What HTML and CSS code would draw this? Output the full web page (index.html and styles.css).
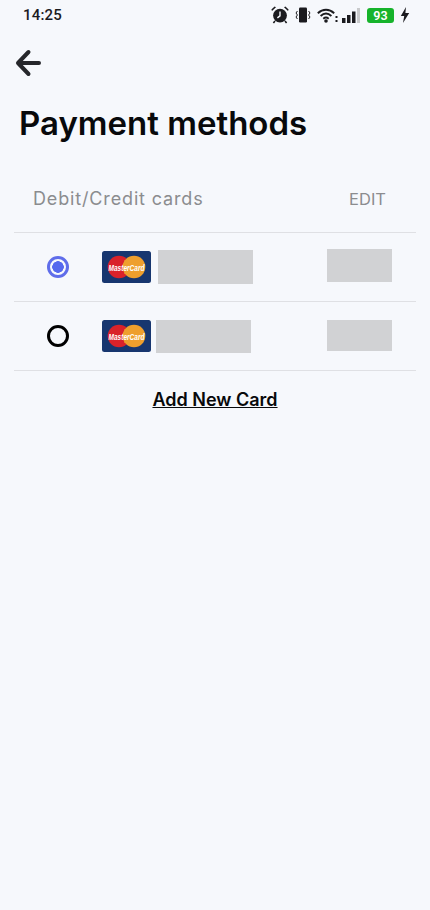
FILE: index.html
```html
<!DOCTYPE html>
<html lang="en">
<head>
<meta charset="utf-8">
<title>Payment methods</title>
<link rel="stylesheet" href="styles.css">
</head>
<body>
<div class="status">
  <span class="time">14:25</span>
  <div class="status-icons">
    <svg class="i-alarm" viewBox="0 0 18 18"><path d="M1 5 5 1.200 3.600.4.4 3.400zM17 5 13 1.200l1.400-.8 3.200 3z" fill="#1b1b1f"/><circle cx="9" cy="9.600" r="6.900" fill="#1b1b1f"/><path d="M9 5.500v4.400l-2.600 2" fill="none" stroke="#f6f8fc" stroke-width="1.400"/><path d="M4 15l-1.600 2M14 15l1.600 2" stroke="#1b1b1f" stroke-width="1.600"/></svg>
    <svg class="i-vib" viewBox="0 0 16 16"><rect x="4" y="0.500" width="8" height="15" rx="1.200" fill="#1b1b1f"/><path d="M2.400 4 1 6l1.400 2L1 10l1.400 2M13.600 4 15 6l-1.400 2L15 10l-1.400 2" fill="none" stroke="#1b1b1f" stroke-width="1"/></svg>
    <svg class="i-wifi" viewBox="0 0 21 15"><g fill="none" stroke="#1b1b1f" stroke-width="1.900"><path d="M.8 5.200C5.800.6 12.200.6 17.200 5.200"/><path d="M3.600 8C7 4.900 11 4.900 14.400 8"/><path d="M6.300 10.700c1.800-1.500 3.600-1.500 5.400 0"/></g><circle cx="9" cy="13" r="1.800" fill="#1b1b1f"/><path d="M18.500 8h2v2h-2zM18.500 12h2v2h-2z" fill="#1b1b1f"/></svg>
    <svg class="i-signal" viewBox="0 0 18 15"><rect x="0" y="10" width="3.500" height="5" fill="#1b1b1f"/><rect x="5" y="7" width="3.500" height="8" fill="#1b1b1f"/><rect x="10" y="3.500" width="3.500" height="11.500" fill="#1b1b1f"/><rect x="15" y="0" width="3" height="15" fill="#c9cacc"/></svg>
    <span class="battery">93</span>
    <svg class="i-bolt" viewBox="0 0 10 16"><path d="M6 0 .8 9h3.400L3 16l6.200-10H5.400z" fill="#1b1b1f"/></svg>
  </div>
</div>

<button class="back" aria-label="Back">
  <svg viewBox="0 0 26 30" width="26" height="30"><path d="M24 15H3.500M13.500 4 3 15l10.500 11" fill="none" stroke="#26272b" stroke-width="4" stroke-linecap="round" stroke-linejoin="round"/></svg>
</button>

<h1 class="title">Payment methods</h1>

<div class="section-head">
  <span class="section-label">Debit/Credit cards</span>
  <span class="edit">EDIT</span>
</div>

<div class="list">
  <div class="row row-a">
    <span class="radio radio-on"></span>
    <svg class="card" viewBox="0 0 49 32"><use href="#mc"/></svg>
    <span class="mask mask-num"></span>
    <span class="mask mask-exp"></span>
  </div>
  <div class="row row-b">
    <span class="radio"></span>
    <svg class="card" viewBox="0 0 49 32">
      <defs>
        <g id="mc">
          <rect width="49" height="32" rx="2.500" fill="#17366f"/>
          <circle cx="17" cy="16" r="11.300" fill="#d9222a"/>
          <circle cx="32" cy="16" r="11.300" fill="#ee9f2d"/>
          <path d="M22 10h5M21 13h7M21 19h7M22 22h5" stroke="#ee9f2d" stroke-width="1.200"/>
          <text x="6.500" y="19.500" textLength="36" lengthAdjust="spacingAndGlyphs" class="mc-text">MasterCard</text>
        </g>
      </defs>
      <use href="#mc"/>
    </svg>
    <span class="mask mask-num"></span>
    <span class="mask mask-exp"></span>
  </div>
</div>

<a class="add" href="#">Add New Card</a>
</body>
</html>
```

FILE: styles.css
```css
* { box-sizing: border-box; }
html, body { margin: 0; padding: 0; }
body {
  width: 430px;
  height: 910px;
  overflow: hidden;
  background: #f6f8fc;
  font-family: "Inter", "Noto Sans", sans-serif;
  display: flex;
  flex-direction: column;
}
.status {
  height: 30px;
  display: flex;
  align-items: center;
  justify-content: space-between;
  padding: 0 20px 0 23px;
  flex: none;
}
.time {
  font: 500 15px/1 "Roboto", sans-serif;
  color: #1b1b1f;
  letter-spacing: 0.2px;
}
.status-icons { display: flex; align-items: center; }
.i-alarm { width: 18px; height: 18px; margin-right: 6px; }
.i-vib { width: 16px; height: 16px; margin-right: 6px; }
.i-wifi { width: 21px; height: 15px; margin-right: 4px; }
.i-signal { width: 18px; height: 15px; margin-right: 7px; }
.battery {
  width: 27px;
  height: 15px;
  border-radius: 3px;
  background: #16b32b;
  color: #fff;
  font: 600 12.500px/15px "Roboto", sans-serif;
  text-align: center;
  margin-right: 6px;
}
.i-bolt { width: 10px; height: 16px; }
.back {
  width: 26px;
  height: 30px;
  margin: 18px 0 0 15px;
  padding: 0;
  border: 0;
  background: none;
  flex: none;
  display: block;
}
.title {
  margin: 25px 0 0 19px;
  font: 600 33px/40px "Inter", sans-serif;
  color: #08090b;
  flex: none;
}
.section-head {
  margin: 44px 0 0;
  padding: 0 44px 0 33px;
  height: 24px;
  display: flex;
  justify-content: space-between;
  align-items: center;
  flex: none;
}
.section-label {
  font: 400 18px/24px "Inter", sans-serif;
  letter-spacing: 0.85px;
  color: #8b8c8f;
}
.edit {
  font: 400 16.500px/24px "Inter", sans-serif;
  color: #8b8c8f;
}
.list {
  margin: 21px 14px 0;
  border-top: 1px solid #dfe0e4;
  flex: none;
}
.row {
  height: 69px;
  border-bottom: 1px solid #dfe0e4;
  display: flex;
  align-items: center;
  padding-left: 33px;
}
.radio {
  width: 22px;
  height: 22px;
  border-radius: 50%;
  border: 3px solid #000;
  flex: none;
}
.radio-on {
  border-color: #5f6dea;
  background: radial-gradient(circle, #5568ee 0 5.500px, transparent 6px);
}
.card { width: 49px; height: 32px; margin-left: 33px; flex: none; }
.mc-text {
  font: italic 700 9.500px "Liberation Sans", sans-serif;
  fill: #fff;
}
.mask { background: #d1d2d4; flex: none; display: block; }
.mask-num { width: 95px; height: 34px; }
.mask-exp { width: 65px; height: 33px; }
.row-a .mask-num { margin-left: 7px; }
.row-a .mask-exp { margin: -3px 0 0 74px; }
.row-b .mask-num { margin-left: 5px; height: 33px; }
.row-b .mask-exp { margin: -1px 0 0 76px; height: 31px; }
.add {
  align-self: center;
  margin-top: 17px;
  font: 600 18px/24px "Inter", sans-serif;
  color: #08090b;
  text-decoration: underline;
  flex: none;
}
```
